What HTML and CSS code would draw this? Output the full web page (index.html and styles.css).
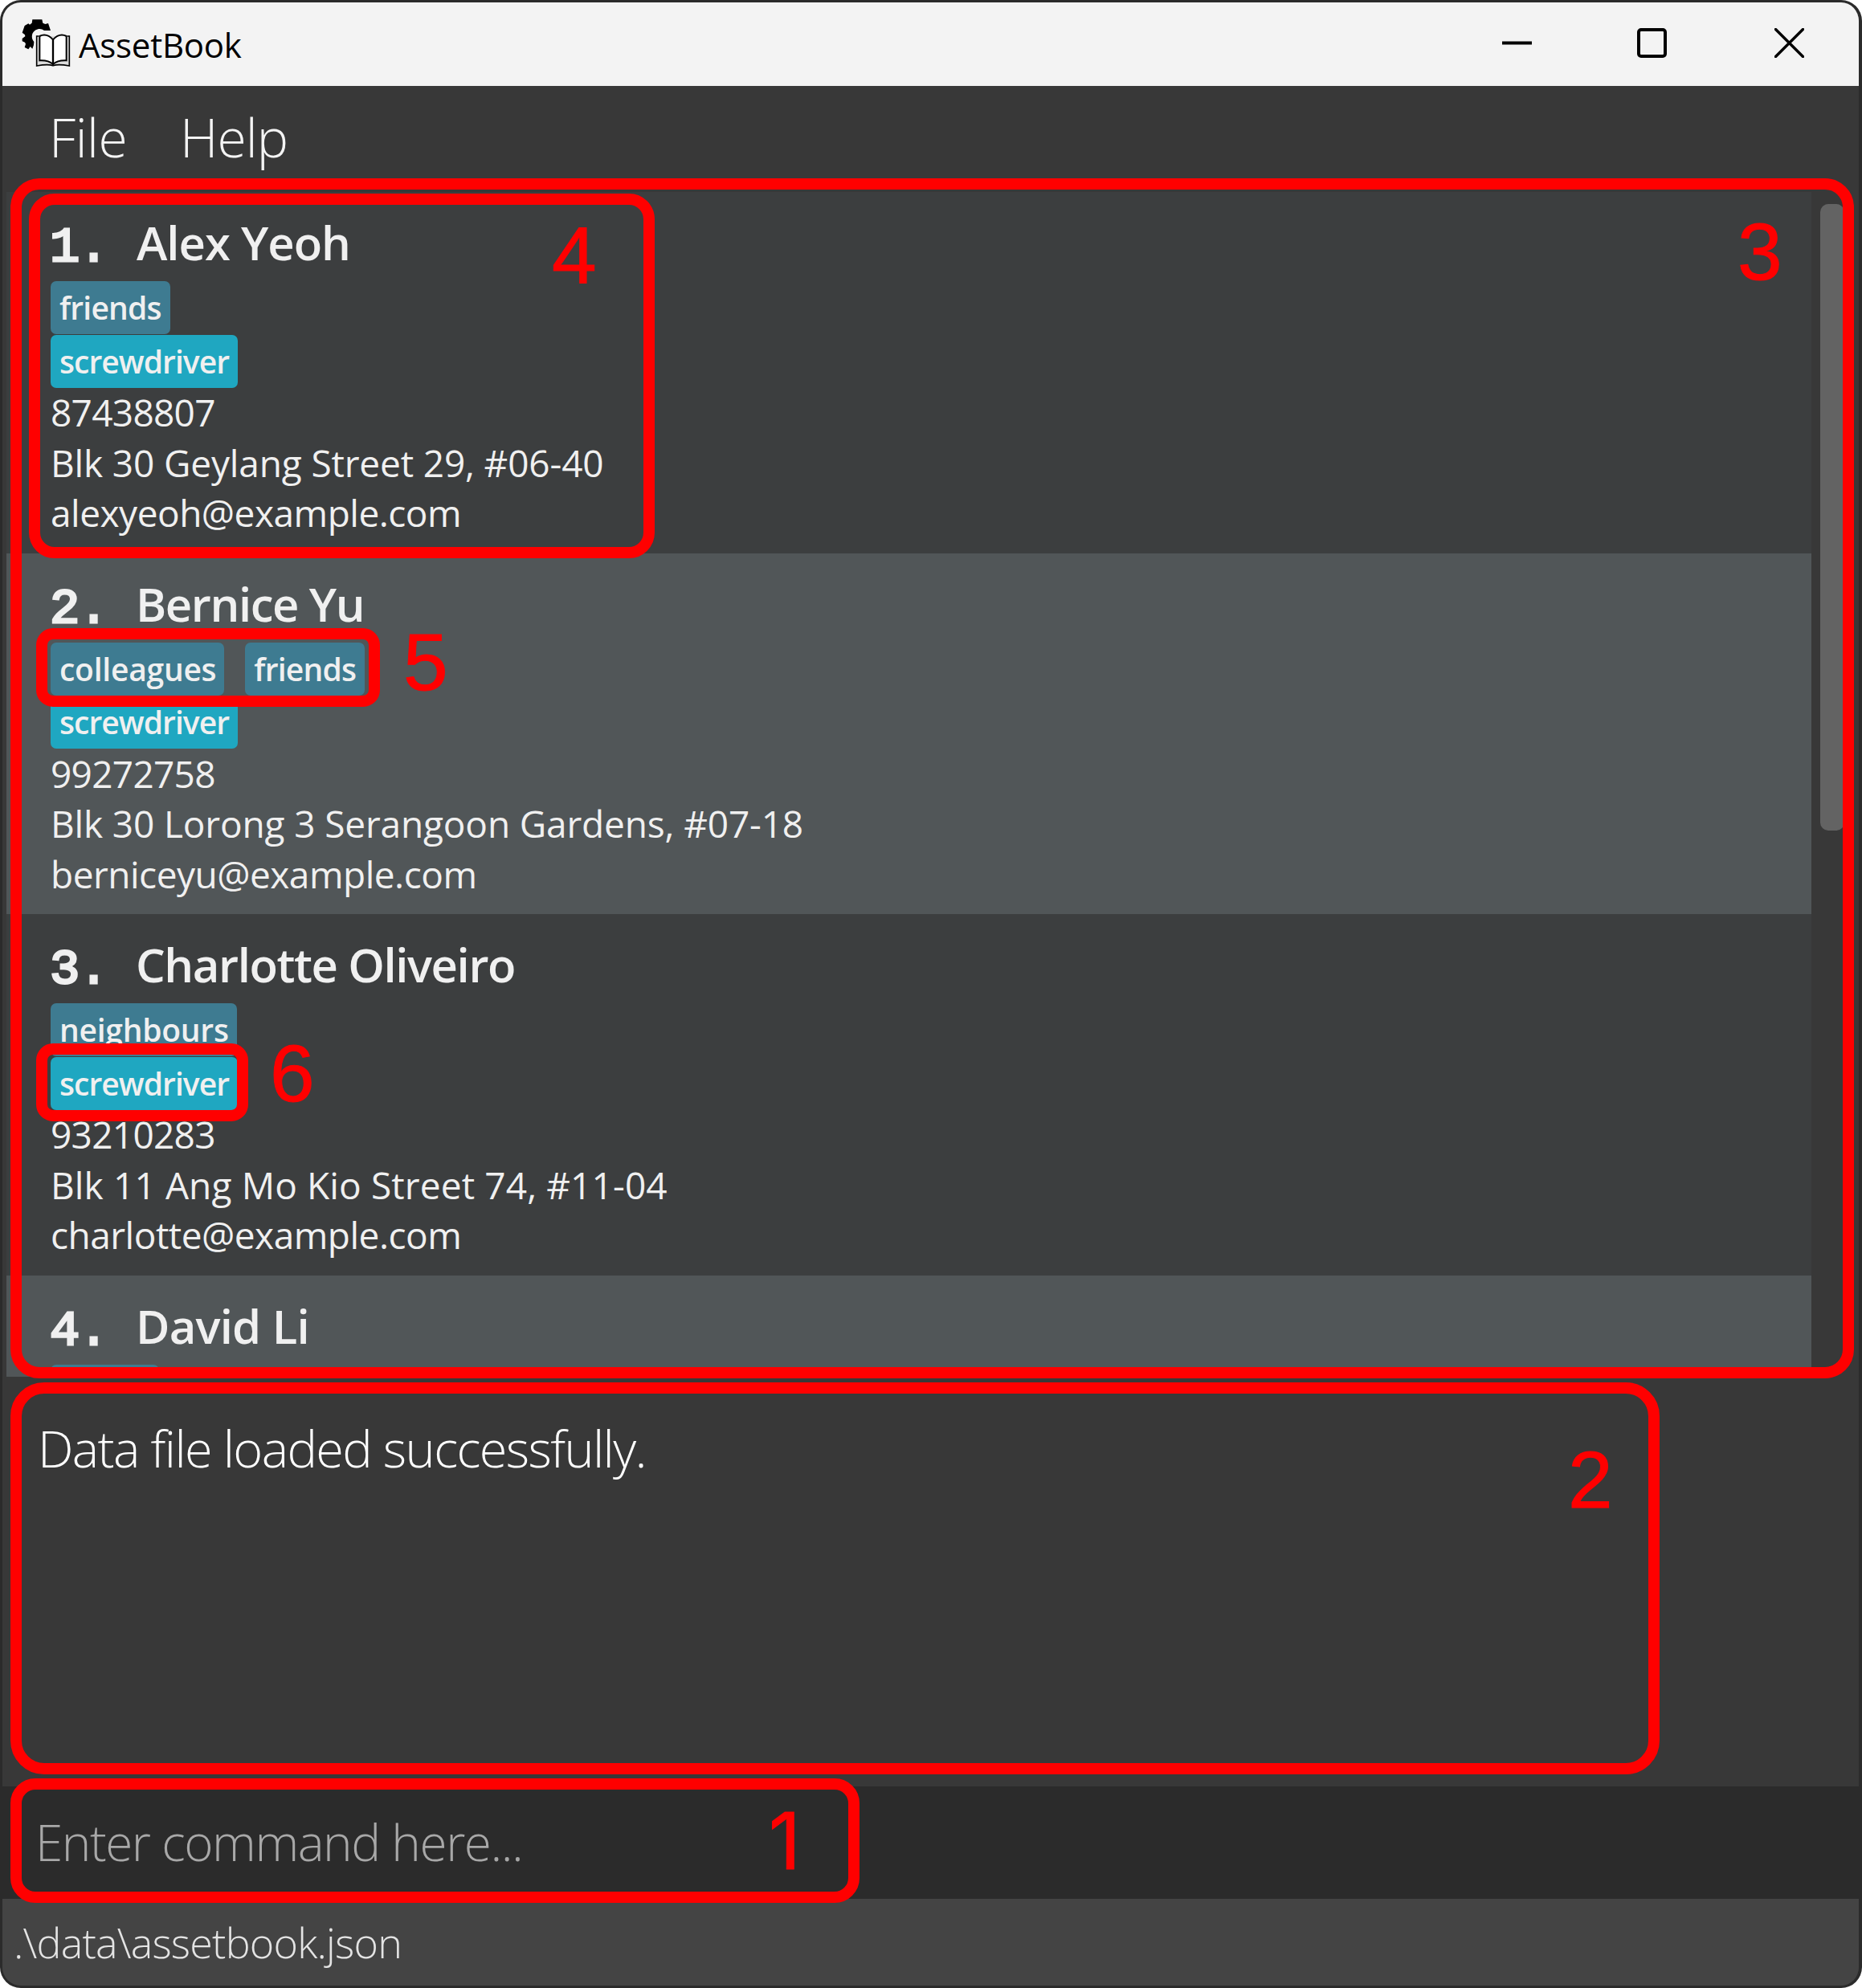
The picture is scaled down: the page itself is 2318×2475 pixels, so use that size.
FILE: index.html
```
<!DOCTYPE html>
<html lang="en">
<head>
<meta charset="utf-8">
<title>AssetBook</title>
<link rel="stylesheet" href="styles.css">
</head>
<body>
<div class="window">
  <header class="titlebar">
    <svg class="app-icon" viewBox="20 20 186 186">
      <path d="M60 27H96L99 40L108 44L119 41L128 68H104C90 56 68 62 60 80C56 94 60 102 66 110L65 122L60 136L52 128L45 138L31 131L35 118L32 112L22 108V98L33 90L32 84L22 76L31 50L45 42L50 46L58 40Z" fill="#000"/>
      <path d="M70 84h122v118h-122z" fill="#f3f3f3"/>
      <path d="M84 89H76V200Q118 192 137 199Q156 192 198 200V89H190" fill="#ddd" stroke="#000" stroke-width="5"/>
      <path d="M87 89Q113 76 137 102Q161 76 187 89V180Q155 178 137 194Q119 178 87 180Z" fill="#fff" stroke="#000" stroke-width="6"/>
      <path d="M137 102V196" stroke="#000" stroke-width="7"/>
    </svg>
    <span class="title">AssetBook</span>
    <div class="controls">
      <svg viewBox="0 0 37 37"><path d="M0 18.5H37" stroke-width="4"/></svg>
      <svg viewBox="0 0 37 37"><rect x="2" y="2" width="33" height="33" rx="3" stroke-width="4"/></svg>
      <svg class="close" viewBox="0 0 37 37"><path d="M1.500 1.500L35.500 35.500M35.500 1.500L1.500 35.500" stroke-width="3.400" stroke-linecap="round"/></svg>
    </div>
  </header>
  <nav class="menubar"><span class="file">File</span><span class="help">Help</span></nav>
  <main class="list-pane">
    <div class="list">
      <section class="card">
        <div class="heading"><span class="index">1.</span><span class="name">Alex Yeoh</span></div>
        <div class="tags"><span class="tag">friends</span></div>
        <div class="tags"><span class="tag asset">screwdriver</span></div>
        <div class="details"><div class="phone">87438807</div><div class="address">Blk 30 Geylang Street 29, #06-40</div><div class="email">alexyeoh@example.com</div></div>
      </section>
      <section class="card">
        <div class="heading"><span class="index">2.</span><span class="name">Bernice Yu</span></div>
        <div class="tags"><span class="tag wide">colleagues</span><span class="tag">friends</span></div>
        <div class="tags"><span class="tag asset">screwdriver</span></div>
        <div class="details"><div class="phone">99272758</div><div class="address">Blk 30 Lorong 3 Serangoon Gardens, #07-18</div><div class="email">berniceyu@example.com</div></div>
      </section>
      <section class="card">
        <div class="heading"><span class="index">3.</span><span class="name">Charlotte Oliveiro</span></div>
        <div class="tags"><span class="tag wide">neighbours</span></div>
        <div class="tags"><span class="tag asset">screwdriver</span></div>
        <div class="details"><div class="phone">93210283</div><div class="address">Blk 11 Ang Mo Kio Street 74, #11-04</div><div class="email">charlotte@example.com</div></div>
      </section>
      <section class="card">
        <div class="heading"><span class="index">4.</span><span class="name">David Li</span></div>
        <div class="tags"><span class="tag cut"></span></div>
      </section>
    </div>
    <div class="scrollbar"><div class="thumb"></div></div>
  </main>
  <section class="result">Data file loaded successfully.</section>
  <section class="command">Enter command here...</section>
  <footer class="status">.\data\assetbook.json</footer>
</div>
<div class="callout box1"></div><div class="callout box2"></div><div class="callout box3"></div>
<div class="callout box4"></div><div class="callout box5"></div><div class="callout box6"></div>
<span class="num num1">1</span><span class="num num2">2</span><span class="num num3">3</span>
<span class="num num4">4</span><span class="num num5">5</span><span class="num num6">6</span>
</body>
</html>
```
FILE: styles.css
```
* { box-sizing: border-box; }
body {
  margin: 0;
  position: relative;
  width: 2318px;
  height: 2475px;
  overflow: hidden;
  background: #fff;
  font-family: "Open Sans", "Noto Sans", sans-serif;
  white-space: nowrap;
}
.window {
  display: flex;
  flex-direction: column;
  width: 2318px;
  height: 2475px;
  border: 3px solid #2b2b2b;
  border-right-width: 4px;
  border-radius: 26px;
  overflow: hidden;
  background: #383838;
}

/* Title bar */
.titlebar {
  display: flex;
  align-items: center;
  height: 104px;
  padding-left: 24px;
  background: #f3f3f3;
  color: #000;
}
.app-icon { width: 62px; height: 62px; margin-bottom: 4px; }
.title { margin-left: 9px; padding-top: 1px; font-size: 42px; letter-spacing: -0.25px; }
.controls { display: flex; margin-left: auto; padding: 0 68px 3px 0; gap: 131px; }
.controls svg { width: 37px; height: 37px; fill: none; stroke: #000; }
.controls .close { margin-left: 3px; }

/* Menu */
.menubar {
  display: flex;
  height: 132px;
  padding-left: 58px;
  font-size: 66px;
  font-weight: 300;
  line-height: 127px;
  color: #f4f4f4;
}
.file { width: 163px; letter-spacing: -0.5px; }
.help { letter-spacing: -1px; }

/* Person list */
.list-pane { display: flex; height: 1475px; padding-left: 5px; }
.list { width: 2247px; overflow: hidden; color: #f0f0f0; }
.card { height: 449.7px; padding: 14px 0 0 55px; background: #3c3e3f; }
.card:nth-child(even) { background: #515658; }
.heading { display: flex; align-items: baseline; height: 97px; line-height: 98px; }
.index {
  width: 107px;
  margin-left: -1px;
  font: 62px/60px "Liberation Mono", monospace;
  -webkit-text-stroke: 3px currentColor;
  letter-spacing: -1.2px;
  transform: translateY(1px);
}
.name { font-size: 58px; font-weight: 600; letter-spacing: -1.4px; }
.card:nth-child(1) .name { margin-left: 1px; letter-spacing: -1px; }
.card:nth-child(4) .name { letter-spacing: -0.8px; }
.tags { display: flex; gap: 26px; height: 66.500px; }
.tag {
  height: 66px;
  padding: 0 11px 0 11px;
  border-radius: 7px;
  background: #3e7b91;
  font-size: 39px;
  font-weight: 600;
  line-height: 65px;
  letter-spacing: -0.8px;
}
.tag.wide { padding-left: 11px; padding-right: 10px; letter-spacing: -0.25px; }
.tag.asset { padding-left: 11px; background: #1fa7c1; letter-spacing: -0.95px; }
.tag.cut { width: 135px; }
.details { margin-top: -1px; font-size: 46px; line-height: 62.500px; }
.phone { letter-spacing: -0.7px; }
.email { letter-spacing: -0.5px; }
.address { letter-spacing: -0.15px; }
.card:nth-child(3) .address { letter-spacing: 0.13px; }
.scrollbar { width: 56px; padding: 15px 0 0 11px; }
.thumb { width: 30px; height: 780px; border-radius: 10px; background: #636363; }

/* Result, command and status */
.result {
  height: 510px;
  padding: 39px 0 0 44px;
  font-size: 63px;
  font-weight: 300;
  line-height: 100px;
  letter-spacing: -1.63px;
  color: #fff;
}
.command {
  height: 140px;
  padding-left: 41px;
  background: #2b2b2b;
  font-size: 62px;
  font-weight: 300;
  line-height: 138px;
  letter-spacing: -1.45px;
  color: #a8a8a8;
}
.status {
  flex: 1;
  padding-left: 14px;
  background: #444;
  font-size: 52px;
  font-weight: 300;
  line-height: 108px;
  letter-spacing: -0.8px;
  color: #e4e4e4;
}

/* Numbered annotations over the window */
.callout { position: absolute; border: 14px solid #f00; }
.box1 { left: 13px; top: 2214px; width: 1057px; height: 155px; border-radius: 31px; }
.box2 { left: 13px; top: 1721px; width: 2053px; height: 488px; border-radius: 42px; }
.box3 { left: 13px; top: 222px; width: 2295px; height: 1494px; border-radius: 36px; }
.box4 { left: 36px; top: 241px; width: 779px; height: 454px; border-radius: 32px; }
.box5 { left: 45px; top: 782px; width: 428px; height: 98px; border-radius: 21px; }
.box6 { left: 45px; top: 1299px; width: 264px; height: 97px; border-radius: 21px; }
.num {
  position: absolute;
  font: 100px/100px "Liberation Sans", Arial, sans-serif;
  color: #f00;
  -webkit-text-stroke: 1px #f00;
}
.num1 { left: 957px; top: 2242px; font: 98px/100px Inter, sans-serif; }
.num2 { left: 1952px; top: 1792px; }
.num3 { left: 2163px; top: 263px; }
.num4 { left: 687px; top: 268px; }
.num5 { left: 502px; top: 774px; }
.num6 { left: 336px; top: 1286px; }
```
